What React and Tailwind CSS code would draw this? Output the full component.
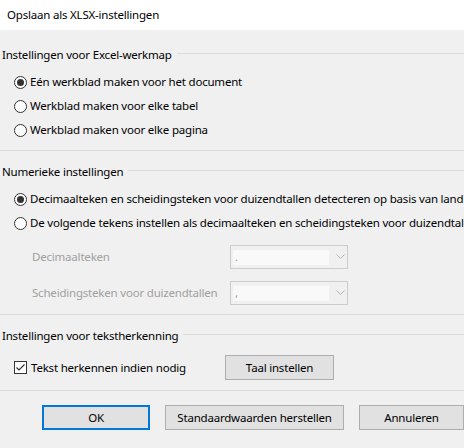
import React from "react";

const font = { fontFamily: '"Noto Sans", "Open Sans", sans-serif' };

function Radio({ checked }) {
  return (
    <span className="relative flex h-[13px] w-[13px] shrink-0 items-center justify-center rounded-full border border-[#333333] bg-white">
      {checked && <span className="h-[7px] w-[7px] rounded-full bg-[#333333]" />}
    </span>
  );
}

function RadioRow({ checked, children }) {
  return (
    <div className="flex h-[24px] items-center pl-[14px]">
      <Radio checked={checked} />
      <span className="ml-[3px] whitespace-nowrap">{children}</span>
    </div>
  );
}

function GroupHeader({ children }) {
  return (
    <div className="flex h-[16px] items-center pl-[2px]">
      <span className="whitespace-nowrap">{children}</span>
      <span className="ml-[5px] mt-[-3px] h-px flex-1 bg-[#dcdcdc]" />
    </div>
  );
}

function Separator() {
  return <div className="h-px w-full bg-[#dcdcdc]" />;
}

function Select({ value }) {
  return (
    <div className="flex h-[24px] w-[118px] shrink-0 items-center border border-[#cccccc] bg-[#f0f0f0] pl-[2px]">
      <div className="flex h-[15px] w-[96px] items-center bg-[#f9f9f9] pl-[2px] text-[#a0a0a0] leading-none">
        {value}
      </div>
      <svg className="ml-[7px]" width="9" height="6" viewBox="0 0 9 6">
        <path d="M0.5 0.5 L4.5 4.5 L8.5 0.5" fill="none" stroke="#b4b4b4" strokeWidth="1" />
      </svg>
    </div>
  );
}

function Button({ children, primary, className = "" }) {
  return (
    <div
      className={
        "flex shrink-0 items-center justify-center bg-[#e1e1e1] whitespace-nowrap " +
        (primary ? "border-2 border-[#0078d7] " : "border border-[#adadad] ") +
        className
      }
    >
      {children}
    </div>
  );
}

export default function App() {
  return (
    <div
      className="h-[448px] w-[464px] overflow-hidden bg-[#f0f0f0] text-[11.5px] tracking-[-0.2px] text-black"
      style={font}
    >
      <div className="flex h-[30px] items-center bg-white pl-[7px]">
        Opslaan als XLSX-instellingen
      </div>

      <div className="mt-[17px]">
        <GroupHeader>Instellingen voor Excel-werkmap</GroupHeader>
      </div>
      <div className="mt-[7px]">
        <RadioRow checked>Eén werkblad maken voor het document</RadioRow>
        <RadioRow>Werkblad maken voor elke tabel</RadioRow>
        <RadioRow>Werkblad maken voor elke pagina</RadioRow>
      </div>
      <div className="mt-[8px]">
        <Separator />
      </div>

      <div className="mt-[13px]">
        <GroupHeader>Numerieke instellingen</GroupHeader>
      </div>
      <div className="mt-[7px]">
        <RadioRow checked>
          Decimaalteken en scheidingsteken voor duizendtallen detecteren op basis van landinstellingen
        </RadioRow>
        <RadioRow>
          De volgende tekens instellen als decimaalteken en scheidingsteken voor duizendtallen
        </RadioRow>
      </div>
      <div className="mt-[10px] flex flex-col gap-[12px] pl-[32px] text-[#a0a0a0]">
        <div className="flex h-[24px] items-center">
          <span className="w-[198px]">Decimaalteken</span>
          <Select value="." />
        </div>
        <div className="flex h-[24px] items-center">
          <span className="w-[198px] whitespace-nowrap">Scheidingsteken voor duizendtallen</span>
          <Select value="," />
        </div>
      </div>
      <div className="mt-[9px]">
        <Separator />
      </div>

      <div className="mt-[13px]">
        <GroupHeader>Instellingen voor tekstherkenning</GroupHeader>
      </div>
      <div className="mt-[11px] flex h-[25px] items-center pl-[14px]">
        <span className="flex h-[13px] w-[13px] shrink-0 items-center justify-center border border-[#333333] bg-white">
          <svg width="11" height="11" viewBox="0 0 11 11">
            <path d="M1.5 5.5 L4 8 L9.5 2.5" fill="none" stroke="#333333" strokeWidth="1.2" />
          </svg>
        </span>
        <span className="ml-[4px] w-[194px] whitespace-nowrap">Tekst herkennen indien nodig</span>
        <Button className="h-[25px] w-[109px]">Taal instellen</Button>
      </div>
      <div className="mt-[10px]">
        <Separator />
      </div>

      <div className="mt-[14px] flex h-[25px] pl-[42px]">
        <Button primary className="w-[108px]">OK</Button>
        <Button className="ml-[15px] w-[179px]">Standaardwaarden herstellen</Button>
        <Button className="ml-[15px] w-[105px]">Annuleren</Button>
      </div>
    </div>
  );
}
